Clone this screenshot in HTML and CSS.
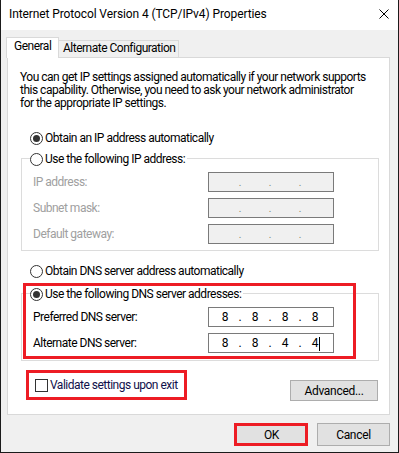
FILE: index.html
```html
<!DOCTYPE html>
<html lang="en">
<head>
    <meta charset="UTF-8">
    <title>Internet Protocol Version 4 (TCP/IPv4) Properties</title>
    <link rel="stylesheet" href="styles.css">
</head>
<body>
    <div class="window">
        <div class="titlebar">
            <span class="title">Internet Protocol Version 4 (TCP/IPv4) Properties</span>
            <svg class="close" width="10" height="10" viewBox="0 0 10 10">
                <path d="M0.5 0.5 L9.5 9.5 M9.5 0.5 L0.5 9.5" stroke="#000" stroke-width="1" fill="none"/>
            </svg>
        </div>
        <div class="client">
            <div class="tabs">
                <div class="tab active">General</div>
                <div class="tab alt">Alternate Configuration</div>
            </div>
            <div class="panel">
                <p class="intro">You can get IP settings assigned automatically if your network supports<br>this capability. Otherwise, you need to ask your network administrator<br>for the appropriate IP settings.</p>

                <div class="option first-option">
                    <span class="radio on"></span>Obtain an IP address automatically
                </div>

                <div class="group ip-group">
                    <div class="legend"><span class="radio"></span>Use the following IP address:</div>
                    <div class="rows">
                        <div class="row disabled">
                            <span class="label">IP address:</span>
                            <div class="ipbox"><span class="oct"></span><span class="dot">.</span><span class="oct"></span><span class="dot">.</span><span class="oct"></span><span class="dot">.</span><span class="oct"></span></div>
                        </div>
                        <div class="row disabled">
                            <span class="label">Subnet mask:</span>
                            <div class="ipbox"><span class="oct"></span><span class="dot">.</span><span class="oct"></span><span class="dot">.</span><span class="oct"></span><span class="dot">.</span><span class="oct"></span></div>
                        </div>
                        <div class="row disabled">
                            <span class="label">Default gateway:</span>
                            <div class="ipbox"><span class="oct"></span><span class="dot">.</span><span class="oct"></span><span class="dot">.</span><span class="oct"></span><span class="dot">.</span><span class="oct"></span></div>
                        </div>
                    </div>
                </div>

                <div class="option dns-option">
                    <span class="radio"></span>Obtain DNS server address automatically
                </div>

                <div class="group dns-group">
                    <div class="legend"><span class="radio on"></span>Use the following DNS server addresses:</div>
                    <div class="rows">
                        <div class="row">
                            <span class="label">Preferred DNS server:</span>
                            <div class="ipbox"><span class="oct">8</span><span class="dot">.</span><span class="oct">8</span><span class="dot">.</span><span class="oct">8</span><span class="dot">.</span><span class="oct">8</span></div>
                        </div>
                        <div class="row">
                            <span class="label">Alternate DNS server:</span>
                            <div class="ipbox"><span class="oct">8</span><span class="dot">.</span><span class="oct">8</span><span class="dot">.</span><span class="oct">4</span><span class="dot">.</span><span class="oct">4<span class="caret"></span></span></div>
                        </div>
                    </div>
                    <div class="mark mark-dns"></div>
                </div>

                <div class="bottom-row">
                    <div class="check-wrap">
                        <span class="checkbox"></span><span class="check-text">Validate settings upon exit</span>
                        <div class="mark mark-check"></div>
                    </div>
                    <button class="btn advanced">Advanced...</button>
                </div>
            </div>
            <div class="actions">
                <div class="ok-wrap">
                    <button class="btn ok">OK</button>
                    <div class="mark mark-ok"></div>
                </div>
                <button class="btn cancel">Cancel</button>
            </div>
        </div>
    </div>
</body>
</html>
```

FILE: styles.css
```css
* {
    margin: 0;
    padding: 0;
    box-sizing: border-box;
}
body {
    width: 399px;
    height: 453px;
    overflow: hidden;
    background-color: #fff;
    font-family: Roboto, "Noto Sans", sans-serif;
    font-size: 12px;
    letter-spacing: -0.5px;
    color: #000;
}
.window {
    width: 399px;
    height: 453px;
    border: 1px solid #1b1b1b;
    border-top: none;
    display: flex;
    flex-direction: column;
}
.titlebar {
    height: 30px;
    background-color: #fff;
    display: flex;
    align-items: center;
    justify-content: space-between;
    padding: 0 9px 2px 8px;
}
.title {
    white-space: nowrap;
    letter-spacing: -0.1px;
}
.close {
    display: block;
}
.client {
    flex: 1;
    background-color: #f0f0f0;
    padding: 0 8px 0 6px;
}
.tabs {
    display: flex;
    align-items: flex-end;
    height: 27px;
    margin-left: -1px;
}
.tab {
    height: 17px;
    border: 1px solid #d9d9d9;
    border-bottom: none;
    background-color: #f0f0f0;
    line-height: 15px;
    white-space: nowrap;
}
.tab.alt {
    width: 121px;
    margin-left: -1px;
    padding-left: 4px;
}
.tab.active {
    height: 21px;
    width: 53px;
    margin-bottom: -1px;
    background-color: #fff;
    padding: 0 0 0 7px;
    line-height: 17px;
    position: relative;
    z-index: 1;
}
.panel {
    width: 383px;
    height: 358px;
    background-color: #fff;
    border: 1px solid #d9d9d9;
    padding: 13px 11px 0 12px;
}
.intro {
    line-height: 13px;
    white-space: nowrap;
}
.option {
    display: flex;
    align-items: center;
    height: 16px;
    margin-left: 10px;
    white-space: nowrap;
}
.first-option {
    margin-top: 20px;
}
.dns-option {
    margin-top: 12px;
}
.radio {
    width: 13px;
    height: 13px;
    border: 1px solid #333;
    border-radius: 50%;
    background-color: #fff;
    margin-right: 2px;
    display: flex;
    align-items: center;
    justify-content: center;
    flex-shrink: 0;
}
.radio.on::after {
    content: "";
    width: 7px;
    height: 7px;
    border-radius: 50%;
    background-color: #333;
}
.group {
    position: relative;
    width: 358px;
    margin-left: 1px;
    border: 1px solid #dcdcdc;
}
.ip-group {
    margin-top: 12px;
    padding: 0 0 6px 11px;
}
.dns-group {
    margin-top: 14px;
    padding: 0 0 7px 11px;
}
.legend {
    display: flex;
    align-items: center;
    width: fit-content;
    height: 16px;
    margin-top: -8px;
    margin-left: -3px;
    padding-right: 2px;
    background-color: #fff;
    white-space: nowrap;
}
.rows {
    display: flex;
    flex-direction: column;
    gap: 6px;
    margin-top: 5px;
}
.row {
    display: flex;
    align-items: center;
    height: 20px;
}
.label {
    width: 175px;
    white-space: nowrap;
}
.row.disabled .label {
    color: #a0a0a0;
}
.ipbox {
    width: 126px;
    height: 20px;
    border: 1px solid #7a7a7a;
    background-color: #fff;
    display: flex;
    align-items: center;
    padding-left: 3px;
    letter-spacing: 0;
}
.row.disabled .ipbox {
    background-color: #f0f0f0;
}
.oct {
    width: 26px;
    text-align: center;
    position: relative;
}
.dot {
    width: 4px;
    text-align: center;
    color: #000;
}
.row.disabled .dot {
    color: #7f8c70;
    font-size: 10px;
}
.caret {
    position: absolute;
    top: 1px;
    left: 17px;
    width: 1px;
    height: 14px;
    background-color: #000;
}
.mark {
    position: absolute;
    border: 3px solid #ed1c24;
    pointer-events: none;
}
.mark-dns {
    left: 1px;
    top: -11px;
    width: 333px;
    height: 76px;
}
.bottom-row {
    display: flex;
    justify-content: space-between;
    align-items: flex-start;
    margin-top: 16px;
}
.check-wrap {
    position: relative;
    display: flex;
    align-items: center;
    height: 16px;
    margin-left: 15px;
}
.checkbox {
    width: 13px;
    height: 13px;
    border: 1px solid #333;
    background-color: #fff;
    margin-right: 2px;
}
.check-text {
    color: #10104a;
    white-space: nowrap;
}
.mark-check {
    left: -9px;
    top: -7px;
    width: 161px;
    height: 30px;
}
.btn {
    font-family: inherit;
    font-size: 12px;
    letter-spacing: -0.3px;
    color: #000;
    background-color: #e1e1e1;
    border: 1px solid #adadad;
    display: flex;
    align-items: center;
    justify-content: center;
}
.advanced {
    width: 88px;
    height: 21px;
    margin-top: 3px;
}
.actions {
    display: flex;
    justify-content: flex-end;
    gap: 9px;
    margin-top: 8px;
}
.ok-wrap {
    position: relative;
}
.ok, .cancel {
    width: 73px;
    height: 23px;
}
.mark-ok {
    left: -1px;
    top: 0;
    width: 74px;
    height: 23px;
}
```
